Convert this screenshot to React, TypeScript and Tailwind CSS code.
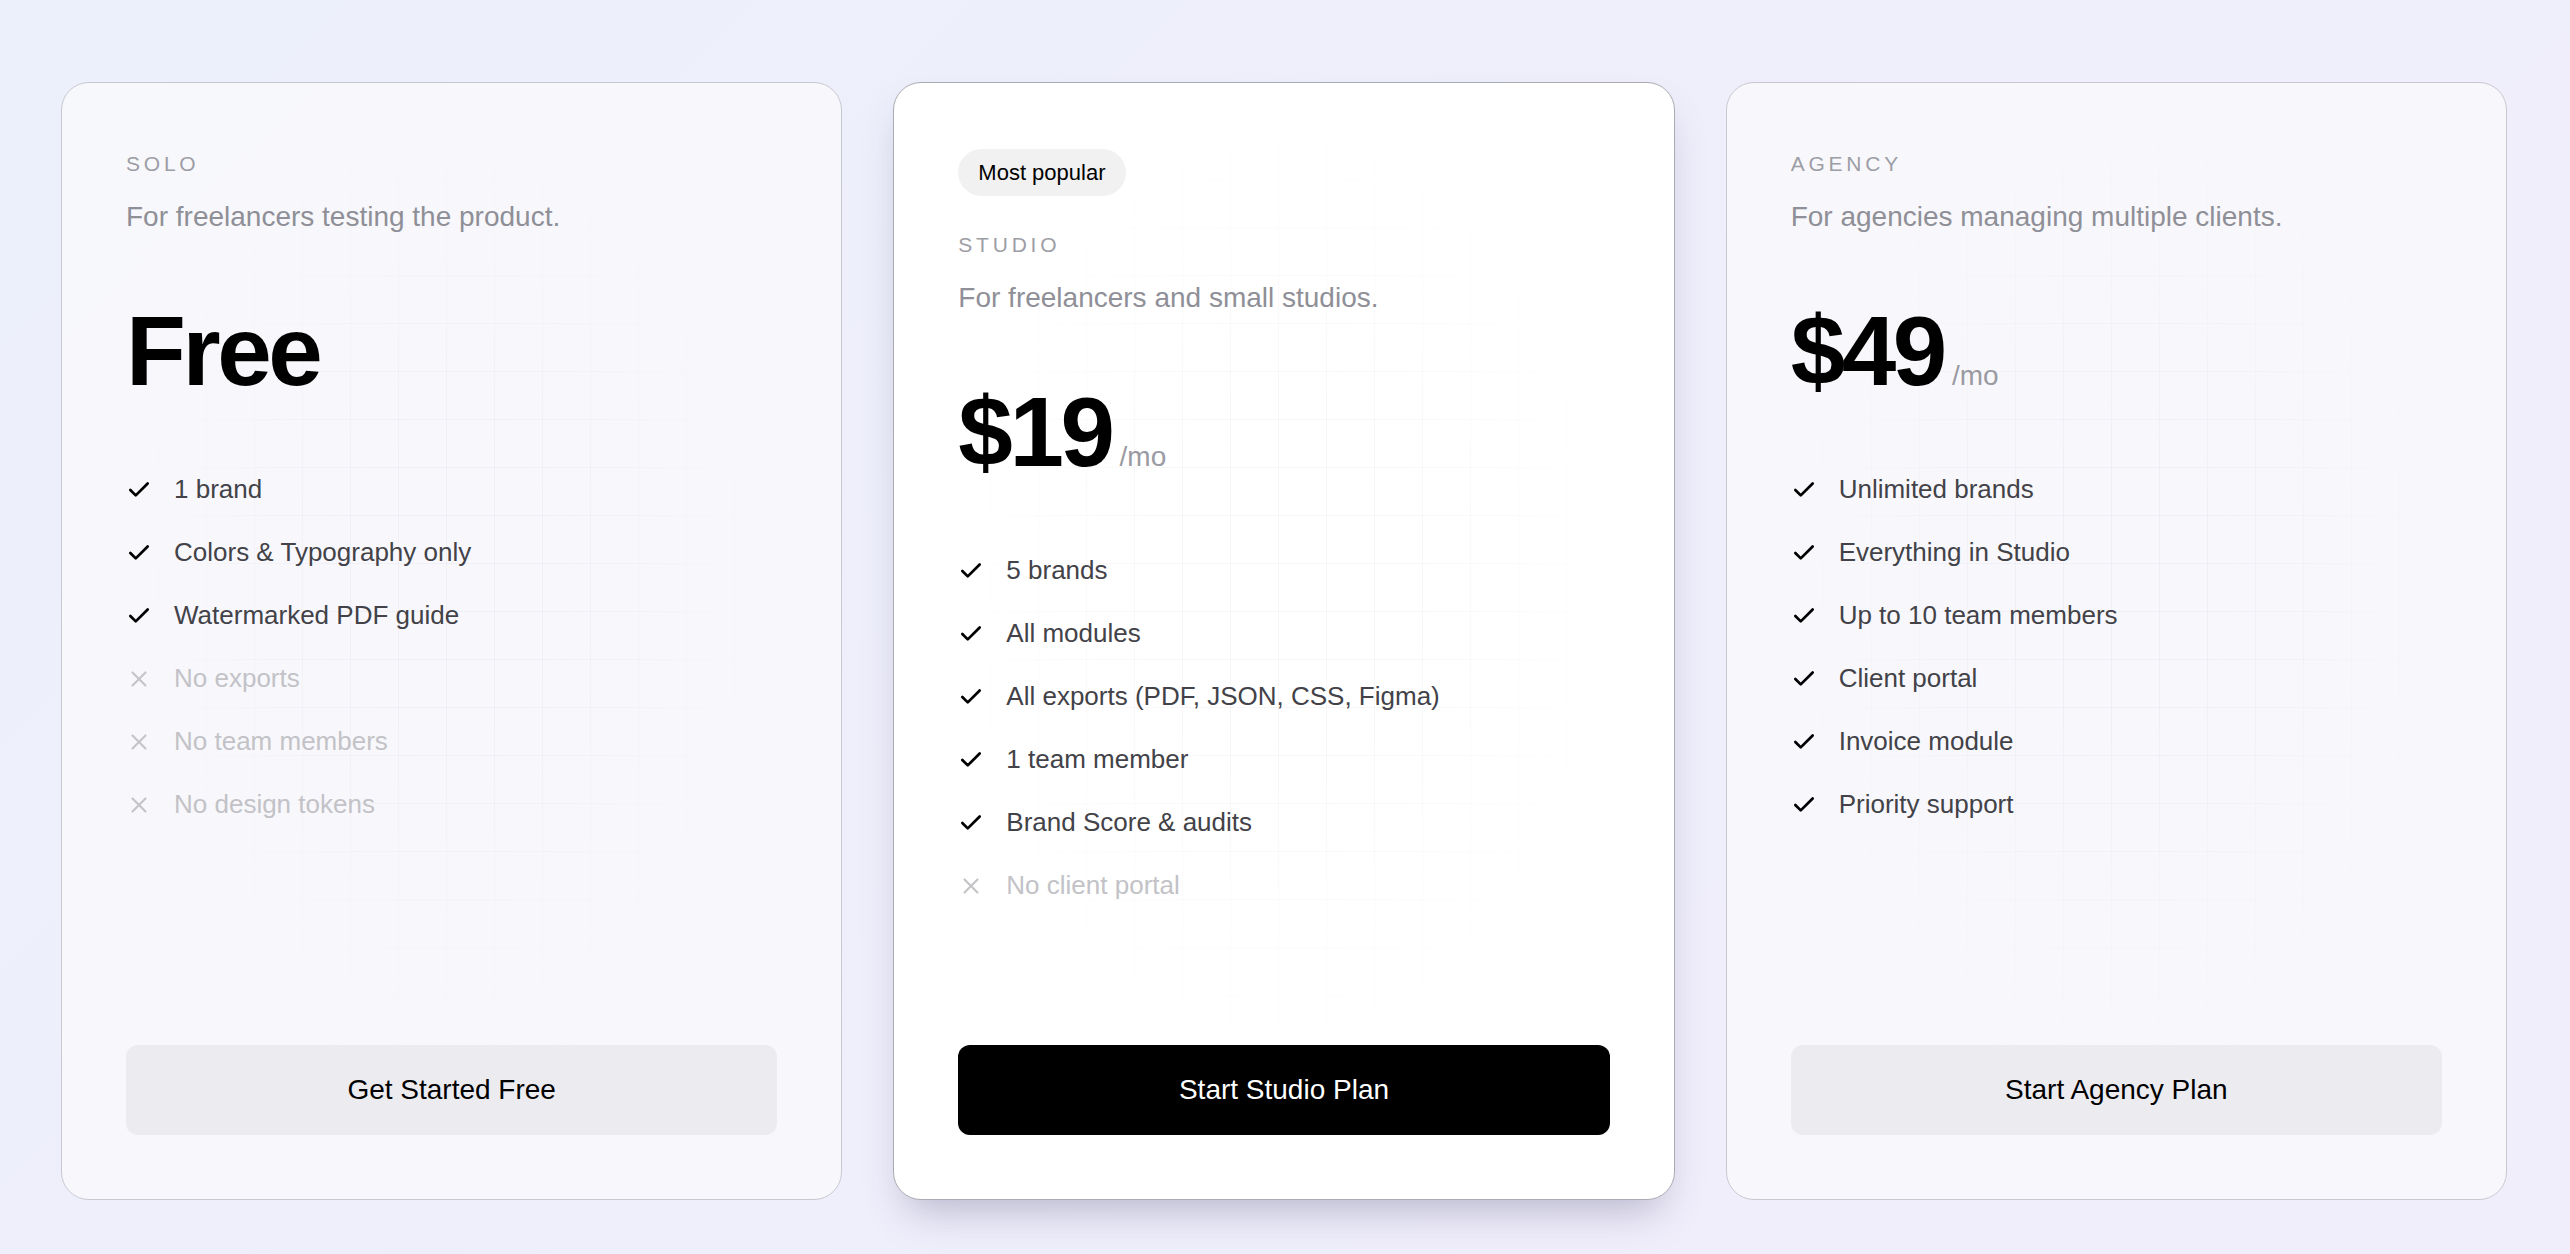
import { Check, X } from 'lucide-react'

type Feature = { label: string; included: boolean }

type Plan = {
  name: string
  blurb: string
  price: string
  per?: string
  cta: string
  featured?: boolean
  features: Feature[]
}

const PLANS: Plan[] = [
  {
    name: 'Solo',
    blurb: 'For freelancers testing the product.',
    price: 'Free',
    cta: 'Get Started Free',
    features: [
      { label: '1 brand', included: true },
      { label: 'Colors & Typography only', included: true },
      { label: 'Watermarked PDF guide', included: true },
      { label: 'No exports', included: false },
      { label: 'No team members', included: false },
      { label: 'No design tokens', included: false },
    ],
  },
  {
    name: 'Studio',
    blurb: 'For freelancers and small studios.',
    price: '$19',
    per: '/mo',
    cta: 'Start Studio Plan',
    featured: true,
    features: [
      { label: '5 brands', included: true },
      { label: 'All modules', included: true },
      { label: 'All exports (PDF, JSON, CSS, Figma)', included: true },
      { label: '1 team member', included: true },
      { label: 'Brand Score & audits', included: true },
      { label: 'No client portal', included: false },
    ],
  },
  {
    name: 'Agency',
    blurb: 'For agencies managing multiple clients.',
    price: '$49',
    per: '/mo',
    cta: 'Start Agency Plan',
    features: [
      { label: 'Unlimited brands', included: true },
      { label: 'Everything in Studio', included: true },
      { label: 'Up to 10 team members', included: true },
      { label: 'Client portal', included: true },
      { label: 'Invoice module', included: true },
      { label: 'Priority support', included: true },
    ],
  },
]

function FeatureRow({ label, included }: Feature) {
  return (
    <li className="flex items-center gap-[22px] text-[26px] leading-[39px]">
      {included ? (
        <Check className="w-[26px] h-[26px] flex-shrink-0 text-black" strokeWidth={2.5} />
      ) : (
        <X className="w-[26px] h-[26px] flex-shrink-0 text-[#c4c4c9]" strokeWidth={2} />
      )}
      <span className={included ? 'text-[#424248]' : 'text-[#c2c2c7]'}>{label}</span>
    </li>
  )
}

function PlanCard({ plan }: { plan: Plan }) {
  const cardTone = plan.featured
    ? 'bg-white border-[#ababb3] shadow-[0_22px_40px_-14px_rgba(70,70,110,0.35)]'
    : 'bg-[#f8f8fc]/90 border-[#c8c8d0]'

  return (
    <div className={`relative flex-1 h-[1118px] rounded-[28px] border overflow-hidden ${cardTone}`}>
      {/* faint grid, faded out towards the edges */}
      <div className="absolute inset-0 pointer-events-none bg-[linear-gradient(to_right,rgba(110,110,150,0.06)_1px,transparent_1px),linear-gradient(to_bottom,rgba(110,110,150,0.06)_1px,transparent_1px)] bg-[size:48px_48px] [mask-image:radial-gradient(ellipse_45%_45%_at_50%_45%,black_30%,transparent_100%)]" />

      <div className="relative h-full flex flex-col px-16 pt-[66px] pb-16">
        {plan.featured && (
          <span className="self-start flex items-center h-[47px] px-5 mb-[34px] rounded-full bg-[#f1f1f1] text-[22px] text-black">
            Most popular
          </span>
        )}

        <div className="text-[21px] leading-[30px] uppercase tracking-[0.18em] text-[#9d9da5]">{plan.name}</div>
        <p className="mt-[18px] text-[28px] leading-[39px] text-[#8f8f97]">{plan.blurb}</p>

        <div className="mt-[66px] flex items-baseline gap-2">
          <span className="text-[98px] leading-none font-bold tracking-[-0.035em] text-black">{plan.price}</span>
          {plan.per && <span className="text-[28px] text-[#9a9aa2]">{plan.per}</span>}
        </div>

        <ul className="mt-[70px] flex flex-col gap-6">
          {plan.features.map((f) => (
            <FeatureRow key={f.label} {...f} />
          ))}
        </ul>

        <button
          className={`mt-auto h-[90px] w-full rounded-[12px] text-[28px] ${
            plan.featured ? 'bg-black text-white' : 'bg-[#ececf0] text-black'
          }`}
        >
          {plan.cta}
        </button>
      </div>
    </div>
  )
}

export default function App() {
  return (
    <div className="min-h-screen w-full bg-[linear-gradient(135deg,#ecf0fb_0%,#efeefb_55%,#f1eefb_100%)] font-['Liberation_Sans',Arial,sans-serif]">
      <div className="flex gap-[51px] pl-[61px] pr-[63px] pt-[82px] pb-[54px]">
        {PLANS.map((p) => (
          <PlanCard key={p.name} plan={p} />
        ))}
      </div>
    </div>
  )
}
